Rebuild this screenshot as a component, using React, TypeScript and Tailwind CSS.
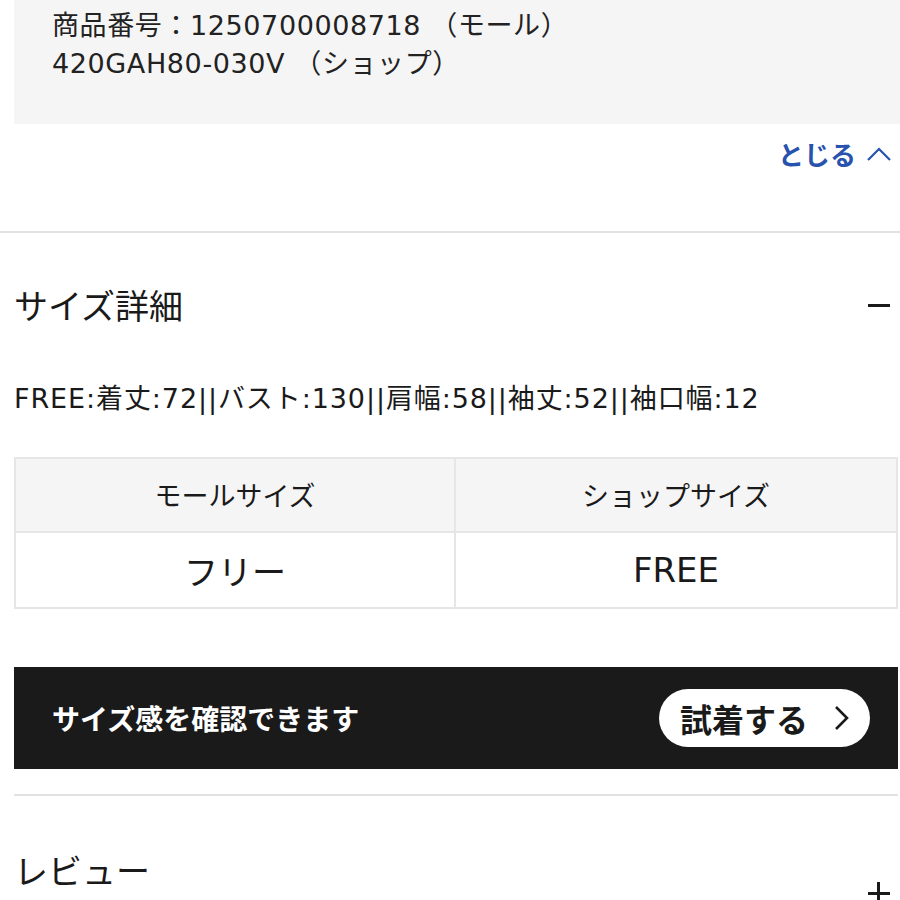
import React from "react";

const F = { fontFamily: '"DejaVu Sans", "Noto Sans CJK JP", sans-serif' };
const J = { fontFamily: '"Noto Sans CJK JP", sans-serif' };

export default function App() {
  return (
    <div className="w-[900px] h-[900px] overflow-hidden bg-white text-[#1a1a1a]" style={F}>
      {/* product number box */}
      <div className="ml-[14px] h-[124px] bg-[#f5f5f5] pl-[38px] pt-[7px] text-[27px] leading-[38px] tracking-[0.6px] text-[#222]">
        <div>商品番号：1250700008718 （モール）</div>
        <div>420GAH80-030V （ショップ）</div>
      </div>

      {/* close link */}
      <div className="h-[60px] flex items-center justify-end pr-[8px]">
        <span className="text-[26px] font-bold text-[#2752ad] leading-none" style={J}>とじる</span>
        <svg width="26" height="16" viewBox="0 0 26 16" className="ml-[10px]">
          <path d="M2 14 L13 3 L24 14" fill="none" stroke="#2752ad" strokeWidth="2.2" />
        </svg>
      </div>

      <div className="mt-[47px] h-[2px] bg-[#e2e2e2]" />

      {/* size details header */}
      <div className="h-[144px] flex items-center justify-between pl-[14px] pr-[10px]">
        <span className="text-[34px] leading-none" style={J}>サイズ詳細</span>
        <div className="w-[22px] h-[3px] bg-[#1a1a1a]" />
      </div>

      <div className="pl-[14px] h-[42px] flex items-center text-[27px] leading-none tracking-[0.9px]">
        FREE:着丈:72||バスト:130||肩幅:58||袖丈:52||袖口幅:12
      </div>

      {/* table */}
      <div className="ml-[14px] mr-[2px] mt-[38px] grid grid-cols-2 border-2 border-[#e6e6e6]">
        <div className="h-[74px] bg-[#f5f5f5] flex items-center justify-center text-[27px] border-r-2 border-b-2 border-[#e6e6e6]" style={J}>
          モールサイズ
        </div>
        <div className="h-[74px] bg-[#f5f5f5] flex items-center justify-center text-[27px] border-b-2 border-[#e6e6e6]" style={J}>
          ショップサイズ
        </div>
        <div className="h-[74px] flex items-center justify-center text-[34px] border-r-2 border-[#e6e6e6]" style={J}>
          フリー
        </div>
        <div className="h-[74px] flex items-center justify-center text-[34px]">
          FREE
        </div>
      </div>

      {/* try on banner */}
      <div className="ml-[14px] mr-[2px] mt-[58px] h-[102px] bg-[#1a1a1a] flex items-center justify-between pl-[38px] pr-[28px]" style={J}>
        <span className="text-white text-[28px] font-bold leading-none">サイズ感を確認できます</span>
        <div className="w-[211px] h-[58px] bg-white rounded-full flex items-center pl-[21px]">
          <span className="text-[32px] font-bold leading-none text-[#1a1a1a]">試着する</span>
          <svg width="18" height="28" viewBox="0 0 18 28" className="ml-[24px]">
            <path d="M4 3 L15 14 L4 25" fill="none" stroke="#1a1a1a" strokeWidth="2.6" />
          </svg>
        </div>
      </div>

      <div className="ml-[14px] mr-[2px] mt-[25px] h-[2px] bg-[#e2e2e2]" />

      {/* review */}
      <div className="relative h-[148px] pl-[14px] flex items-center">
        <span className="text-[34px] leading-none" style={J}>レビュー</span>
        <div className="absolute left-[868px] top-[96px] w-[22px] h-[3px] bg-[#1a1a1a]" />
        <div className="absolute left-[877px] top-[86px] w-[3px] h-[22px] bg-[#1a1a1a]" />
      </div>
    </div>
  );
}
